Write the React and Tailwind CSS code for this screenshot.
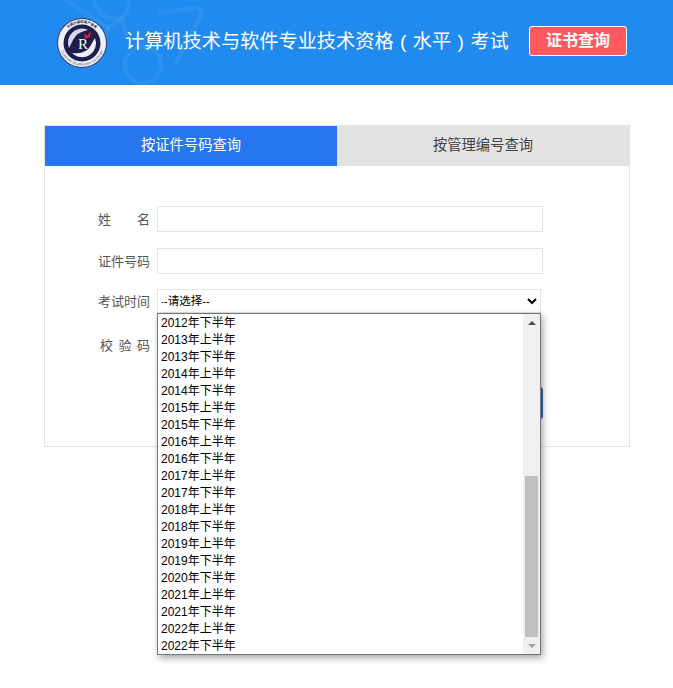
import React from 'react';

const FONT = "font-['Liberation_Sans','Noto_Sans_CJK_SC',sans-serif]";

const EXAM_DATES = [
  '2012年下半年', '2013年上半年', '2013年下半年', '2014年上半年', '2014年下半年',
  '2015年上半年', '2015年下半年', '2016年上半年', '2016年下半年', '2017年上半年',
  '2017年下半年', '2018年上半年', '2018年下半年', '2019年上半年', '2019年下半年',
  '2020年下半年', '2021年上半年', '2021年下半年', '2022年上半年', '2022年下半年'
];

const Watermark = () => (
  <svg className="absolute left-0 top-0" width="260" height="85" viewBox="0 0 260 85" fill="none" stroke="#ffffff" strokeOpacity="0.055" strokeWidth="4.5" strokeLinecap="round" strokeLinejoin="round">
    <circle cx="143" cy="65" r="18" />
    <path d="M160 13 L194 8 Q204 8 200 18 L176 62" />
    <path d="M63 -2 L108 28 L100 58" />
    <path d="M93 -2 Q100 22 122 18 Q130 10 128 -2" />
    <path d="M108 28 L122 18 L126 34" />
  </svg>
);

const Logo = () => (
  <svg width="50" height="50" viewBox="0 0 50 50">
    <defs>
      <path id="ringTop" d="M5 25 A20 20 0 0 1 45 25" />
      <path id="ringBottom" d="M2.5 25 A22.5 22.5 0 0 0 47.5 25" />
    </defs>
    <circle cx="25" cy="25" r="25" fill="#3a3a72" />
    <circle cx="25" cy="25" r="24" fill="#eef0f6" />
    <text fontSize="3.4" fontWeight="700" fill="#23224f" fontFamily="Noto Sans CJK SC, sans-serif">
      <textPath href="#ringTop" startOffset="50%" textAnchor="middle">中国计算机用户协会</textPath>
    </text>
    <text fontSize="3.6" fill="#4a5a8c" fontFamily="Liberation Sans, sans-serif">
      <textPath href="#ringBottom" startOffset="50%" textAnchor="middle">Computer Qualification Certificate</textPath>
    </text>
    <circle cx="25" cy="25" r="18.5" fill="#1e1d4c" />
    <path d="M38 20 A14 14 0 0 1 15 35 Q29 37 34 27 Q36 23 38 20 Z" fill="#eef0f6" />
    <path d="M12 30 A14 14 0 0 1 31 12 Q20 14 16 22 Q14 26 12 30 Z" fill="#d5d8e8" />
    <text x="26" y="31" textAnchor="middle" fontSize="15" fontFamily="Liberation Serif, serif" fill="#f4f5f8">R</text>
    <path d="M27 15 L30 18 L34 13 L33 19 L28 21 Z" fill="#d8232f" />
  </svg>
);

const Label = ({ children, className = '' }) => (
  <span className={`flex w-[52px] shrink-0 pt-[2px] text-[13px] leading-5 text-[#555] ${className}`}>{children}</span>
);

const ExamDropdown = () => (
  <div className="absolute left-0 top-full z-10 flex h-[342px] w-[384px] border border-[#767676] bg-white shadow-[2px_3px_7px_rgba(0,0,0,0.35)]">
    <ul className="flex-1 pt-px">
      {EXAM_DATES.map((date) => (
        <li key={date} className="h-[17px] pl-[3px] text-[12px] leading-[17px] text-black">{date}</li>
      ))}
    </ul>
    <div className="flex w-[17px] flex-col items-center bg-[#f0f0f0]">
      <div className="flex h-[17px] w-full shrink-0 items-center justify-center">
        <span className="h-0 w-0 border-x-[4px] border-b-[4px] border-x-transparent border-b-[#505050]" />
      </div>
      <div className="flex-1" />
      <div className="h-[161px] w-[13px] shrink-0 bg-[#c0c0c0]" />
      <div className="flex h-[17px] w-full shrink-0 items-center justify-center">
        <span className="h-0 w-0 border-x-[4px] border-t-[4px] border-x-transparent border-t-[#a3a3a3]" />
      </div>
    </div>
  </div>
);

export default function App() {
  return (
    <div className={`min-h-[688px] bg-white ${FONT}`}>
      <header className="relative flex h-[85px] items-center overflow-hidden bg-[#208aef] pl-[57px]">
        <Watermark />
        <div className="relative flex items-center">
          <Logo />
          <h1 className="ml-[18px] w-[384px] whitespace-nowrap text-[19.2px] font-normal text-white">
            计算机技术与软件专业技术资格<span className="inline-block w-[1em] text-center">(</span>水平<span className="inline-block w-[1em] text-center">)</span>考试
          </h1>
          <button className="mb-[3px] ml-[20px] h-[30px] w-[98px] rounded-[3px] border border-white bg-[#ff5a5f] text-[16px] font-bold text-white">证书查询</button>
        </div>
      </header>

      <main className="ml-[44px] mt-[40px] h-[322px] w-[586px] border border-[#e3e3e3]">
        <div className="flex h-[40px] text-[14.3px]">
          <div className="flex w-[292px] items-center justify-center bg-[#2776ee] text-white">按证件号码查询</div>
          <div className="flex flex-1 items-center justify-center bg-[#e3e3e3] text-[#444]">按管理编号查询</div>
        </div>

        <form className="pl-[53px] pt-[40px]">
          <div className="flex h-[26px] items-center gap-[7px]">
            <Label className="justify-between"><span>姓</span><span>名</span></Label>
            <input className="h-[26px] w-[386px] border border-[#e3e3e3] bg-white" />
          </div>
          <div className="mt-[16px] flex h-[26px] items-center gap-[7px]">
            <Label>证件号码</Label>
            <input className="h-[26px] w-[386px] border border-[#e3e3e3] bg-white" />
          </div>
          <div className="mt-[15px] flex h-[24px] items-center gap-[7px]">
            <Label>考试时间</Label>
            <div className="relative">
              <select defaultValue="" className="block h-[24px] w-[384px] border border-[#e3e3e3] bg-white indent-[-2px] text-[11.5px] text-black">
                <option value="">--请选择--</option>
              </select>
              <ExamDropdown />
            </div>
          </div>
          <div className="mt-[18px] flex h-[28px] items-center gap-[7px]">
            <Label className="justify-between pl-[2px]"><span>校</span><span>验</span><span>码</span></Label>
            <input className="h-[28px] w-[200px] border border-[#e3e3e3] bg-white" />
          </div>
          <div className="mt-[28px] flex justify-end pr-[86px]">
            <button type="button" className="h-[32px] w-[386px] rounded-[3px] bg-[#2a6bd0] text-[14px] text-white">查询</button>
          </div>
        </form>
      </main>
    </div>
  );
}
